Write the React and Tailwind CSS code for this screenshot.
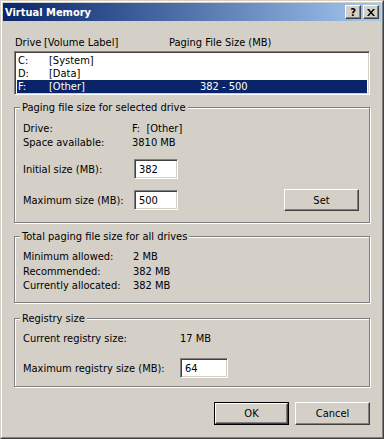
import { useState } from "react";

const raised =
  "border border-t-white border-l-white border-b-[#404040] border-r-[#404040] shadow-[inset_-1px_-1px_0_#808080]";
const sunken =
  "border border-t-[#808080] border-l-[#808080] border-b-white border-r-white shadow-[inset_1px_1px_0_#404040,inset_-1px_-1px_0_#d4d0c8]";

const drives = [
  { letter: "C:", label: "[System]", size: "" },
  { letter: "D:", label: "[Data]", size: "" },
  { letter: "F:", label: "[Other]", size: "382 - 500" },
];

function Group({ title, className = "", children }) {
  return (
    <div
      className={`relative border border-[#808080] shadow-[inset_1px_1px_0_#ffffff,1px_1px_0_#ffffff] ${className}`}
    >
      <span className="absolute -top-[7px] left-[5px] bg-[#d4d0c8] px-[2px] leading-[13px]">
        {title}
      </span>
      {children}
    </div>
  );
}

function Field({ value, className = "" }) {
  return (
    <div className={`flex h-[20px] items-center bg-white pl-[4px] ${sunken} ${className}`}>
      {value}
    </div>
  );
}

function Button({ children, isDefault, className = "" }) {
  if (isDefault) {
    return (
      <div className={`border border-black ${className}`}>
        <div className={`flex h-full items-center justify-center ${raised}`}>{children}</div>
      </div>
    );
  }
  return <div className={`flex items-center justify-center ${raised} ${className}`}>{children}</div>;
}

export default function App() {
  const [selected, setSelected] = useState(2);

  return (
    <div className="h-[439px] w-[384px] border border-t-[#d4d0c8] border-l-[#d4d0c8] border-b-[#404040] border-r-[#404040] bg-[#d4d0c8] font-['Tahoma','DejaVu_Sans_Condensed','Liberation_Sans',sans-serif] text-[11px] leading-[13px] text-black">
      <div className="h-full border border-t-white border-l-white border-b-[#808080] border-r-[#808080] p-px">
        {/* title bar */}
        <div className="flex h-[18px] items-center justify-between bg-gradient-to-r from-[#0a246a] to-[#a6caf0] pl-[2px] pr-[2px]">
          <span className="font-bold text-white">Virtual Memory</span>
          <div className="flex gap-[2px]">
            <div className={`flex h-[14px] w-[16px] items-center justify-center bg-[#d4d0c8] text-[11px] font-bold ${raised}`}>
              ?
            </div>
            <div className={`flex h-[14px] w-[16px] items-center justify-center bg-[#d4d0c8] ${raised}`}>
              <svg width="8" height="7" viewBox="0 0 8 7">
                <path d="M0 0h2l2 2.5L6 0h2L5 3.5 8 7H6L4 4.5 2 7H0l3-3.5z" fill="black" />
              </svg>
            </div>
          </div>
        </div>

        <div className="px-[11px]">
          {/* drive list */}
          <div className="mt-[15px] flex h-[13px]">
            <span className="w-[30px] pl-[1px]">Drive</span>
            <span className="w-[125px]">[Volume Label]</span>
            <span>Paging File Size (MB)</span>
          </div>
          <div className={`mt-[2px] h-[44px] bg-white p-[2px] ${sunken}`}>
            {drives.map((d, i) => (
              <div
                key={d.letter}
                onClick={() => setSelected(i)}
                className={`flex h-[13px] ${i === selected ? "bg-[#0a246a] text-white" : ""}`}
              >
                <span className="w-[32px] pl-px">{d.letter}</span>
                <span className="w-[151px]">{d.label}</span>
                <span>{d.size}</span>
              </div>
            ))}
          </div>

          {/* selected drive */}
          <Group title="Paging file size for selected drive" className="mt-[12px] h-[116px]">
            <div className="pl-[8px] pr-[10px] pt-[14px]">
              <div className="flex h-[14px]">
                <span className="w-[109px]">Drive:</span>
                <span>F:&nbsp; [Other]</span>
              </div>
              <div className="flex h-[14px]">
                <span className="w-[109px]">Space available:</span>
                <span>3810 MB</span>
              </div>
              <div className="mt-[9px] flex items-center">
                <span className="w-[111px]">Initial size (MB):</span>
                <Field value="382" className="w-[44px]" />
              </div>
              <div className="mt-[10px] flex items-center">
                <span className="w-[111px]">Maximum size (MB):</span>
                <Field value="500" className="w-[44px]" />
                <Button className="ml-auto h-[22px] w-[75px]">Set</Button>
              </div>
            </div>
          </Group>

          {/* totals */}
          <Group title="Total paging file size for all drives" className="mt-[13px] h-[67px]">
            <div className="pl-[8px] pt-[13px]">
              {[
                ["Minimum allowed:", "2 MB"],
                ["Recommended:", "382 MB"],
                ["Currently allocated:", "382 MB"],
              ].map(([k, v]) => (
                <div key={k} className="flex h-[14.5px]">
                  <span className="w-[110px]">{k}</span>
                  <span>{v}</span>
                </div>
              ))}
            </div>
          </Group>

          {/* registry */}
          <Group title="Registry size" className="mt-[15px] h-[69px]">
            <div className="pl-[8px] pt-[13px]">
              <div className="flex h-[14px]">
                <span className="w-[157px]">Current registry size:</span>
                <span>17 MB</span>
              </div>
              <div className="mt-[12px] flex items-center">
                <span className="w-[157px]">Maximum registry size (MB):</span>
                <Field value="64" className="w-[48px]" />
              </div>
            </div>
          </Group>

          <div className="mt-[15px] flex justify-end gap-[6px]">
            <Button isDefault className="h-[23px] w-[75px]">OK</Button>
            <Button className="h-[23px] w-[75px]">Cancel</Button>
          </div>
        </div>
      </div>
    </div>
  );
}
